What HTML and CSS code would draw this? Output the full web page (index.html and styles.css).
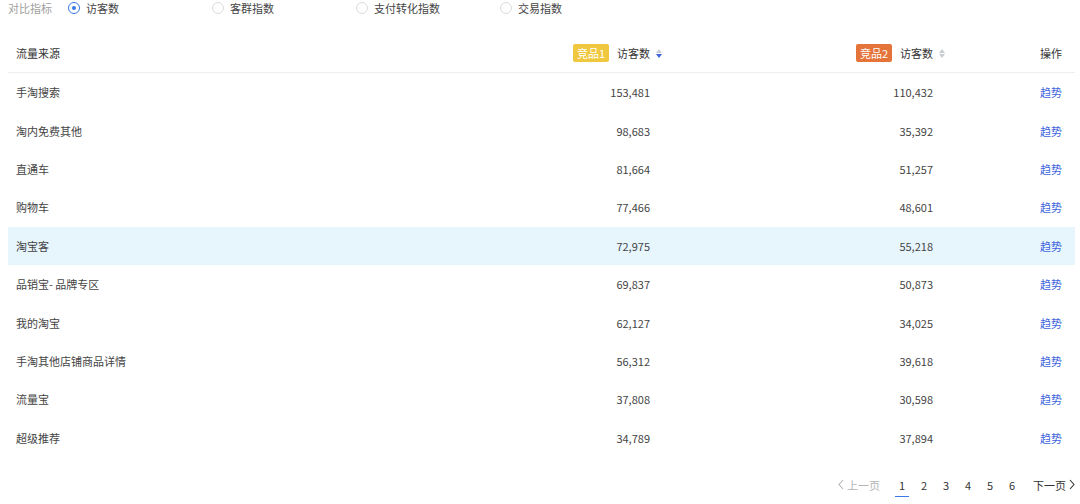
FILE: index.html
```html
<!DOCTYPE html>
<html lang="zh-CN">
<head>
<meta charset="utf-8">
<link rel="stylesheet" href="styles.css">
</head>
<body>
<div class="page">
  <div class="filter">
    <span class="filter-label">对比指标</span>
    <label class="opt"><span class="radio on"></span>访客数</label>
    <label class="opt"><span class="radio"></span>客群指数</label>
    <label class="opt"><span class="radio"></span>支付转化指数</label>
    <label class="opt"><span class="radio"></span>交易指数</label>
  </div>

  <div class="table">
    <div class="row head">
      <div class="c name">流量来源</div>
      <div class="c num"><span class="badge yellow">竞品1</span><span class="hl">访客数</span><span class="sort"><i class="up"></i><i class="down active"></i></span></div>
      <div class="c num"><span class="badge orange">竞品2</span><span class="hl">访客数</span><span class="sort"><i class="up"></i><i class="down"></i></span></div>
      <div class="c op">操作</div>
    </div>
    <div class="row"><div class="c name">手淘搜索</div><div class="c num v">153,481</div><div class="c num v">110,432</div><div class="c op"><a>趋势</a></div></div>
    <div class="row"><div class="c name">淘内免费其他</div><div class="c num v">98,683</div><div class="c num v">35,392</div><div class="c op"><a>趋势</a></div></div>
    <div class="row"><div class="c name">直通车</div><div class="c num v">81,664</div><div class="c num v">51,257</div><div class="c op"><a>趋势</a></div></div>
    <div class="row"><div class="c name">购物车</div><div class="c num v">77,466</div><div class="c num v">48,601</div><div class="c op"><a>趋势</a></div></div>
    <div class="row hover"><div class="c name">淘宝客</div><div class="c num v">72,975</div><div class="c num v">55,218</div><div class="c op"><a>趋势</a></div></div>
    <div class="row"><div class="c name">品销宝- 品牌专区</div><div class="c num v">69,837</div><div class="c num v">50,873</div><div class="c op"><a>趋势</a></div></div>
    <div class="row"><div class="c name">我的淘宝</div><div class="c num v">62,127</div><div class="c num v">34,025</div><div class="c op"><a>趋势</a></div></div>
    <div class="row"><div class="c name">手淘其他店铺商品详情</div><div class="c num v">56,312</div><div class="c num v">39,618</div><div class="c op"><a>趋势</a></div></div>
    <div class="row"><div class="c name">流量宝</div><div class="c num v">37,808</div><div class="c num v">30,598</div><div class="c op"><a>趋势</a></div></div>
    <div class="row"><div class="c name">超级推荐</div><div class="c num v">34,789</div><div class="c num v">37,894</div><div class="c op"><a>趋势</a></div></div>
  </div>

  <div class="pager">
    <span class="prev"><svg class="chev" width="6" height="11" viewBox="0 0 6 11"><path d="M5 1 L1 5.5 L5 10" fill="none" stroke="currentColor" stroke-width="1.1"/></svg>上一页</span>
    <span class="pg active">1</span>
    <span class="pg">2</span>
    <span class="pg">3</span>
    <span class="pg">4</span>
    <span class="pg">5</span>
    <span class="pg">6</span>
    <span class="next">下一页<svg class="chev" width="6" height="11" viewBox="0 0 6 11"><path d="M1 1 L5 5.5 L1 10" fill="none" stroke="currentColor" stroke-width="1.1"/></svg></span>
  </div>
</div>
</body>
</html>
```

FILE: styles.css
```css
* { box-sizing: border-box; }
html, body { margin: 0; padding: 0; background: #fff; }
body {
  font-family: "Noto Sans CJK SC", "Noto Sans", sans-serif;
  font-size: 11px;
  color: #444;
}
.page { width: 1080px; height: 504px; overflow: hidden; padding: 0 5px 0 8px; }

.filter { display: flex; align-items: center; height: 16px; }
.filter-label { color: #a0a0a0; width: 60px; }
.opt { display: flex; align-items: center; width: 144px; gap: 6px; color: #444; }
.radio {
  width: 12px; height: 12px; border-radius: 50%;
  border: 1px solid #dcdcdc; background: #fff; position: relative;
}
.radio.on { border-color: #3a78e6; }
.radio.on::after {
  content: ""; position: absolute; left: 3px; top: 3px;
  width: 4px; height: 4px; border-radius: 50%; background: #3a78e6;
}

.table { margin-top: 18px; width: 1067px; }
.row {
  display: grid;
  grid-template-columns: 1fr 264px 283px 128px;
  height: 38.4px;
  align-items: center;
}
.row.head { height: 39px; border-bottom: 1px solid #eeeeee; color: #333; }
.row.hover { background: #e7f5fd; }
.c { display: flex; align-items: center; }
.name { padding-left: 8px; }
.num { justify-content: flex-end; padding-right: 14px; }
.head .num { padding-right: 0; }
.op { justify-content: flex-end; padding-right: 13px; }
.op a { color: #3c64dc; }

.badge {
  display: inline-flex; align-items: center; justify-content: center;
  width: 36px; height: 18px; border-radius: 2px; color: #fff; margin-right: 8px;
}
.badge.yellow { background: #efc83e; }
.badge.orange { background: #e5743a; }
.sort { display: inline-flex; flex-direction: column; gap: 1px; align-items: center; padding-left: 5px; box-sizing: content-box; width: 8px; margin-right: 1px; }
.sort i { width: 0; height: 0; border-left: 3.5px solid transparent; border-right: 3.5px solid transparent; }
.sort .up { border-bottom: 4px solid #c8ccd3; }
.sort .down { border-top: 4px solid #c8ccd3; }
.sort .down.active { border-top-color: #3c64dc; }

.pager {
  margin-top: 18px; height: 20px;
  display: flex; align-items: center; justify-content: flex-end;
  color: #333;
}
.prev, .next { display: inline-flex; align-items: center; gap: 3px; }
.prev { color: #b5b5b5; margin-right: 11px; }
.next { margin-left: 10px; }
.chev { display: block; }
.pg { width: 22px; text-align: center; position: relative; }
.pg.active::after {
  content: ""; position: absolute; left: 4px; right: 4px; bottom: -4px;
  height: 1px; background: #3a78e6;
}
```
